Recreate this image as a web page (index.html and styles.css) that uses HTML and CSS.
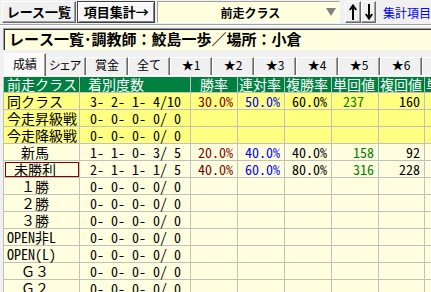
FILE: index.html
```html
<!DOCTYPE html>
<html lang="ja">
<head>
    <meta charset="UTF-8">
    <title>項目集計</title>
    <link rel="stylesheet" href="styles.css">
</head>
<body>
    <div class="toolbar">
        <button class="btn btn-list">レース一覧</button>
        <button class="btn btn-sum">項目集計→</button>
        <div class="combo">
            <span class="combo-text">前走クラス</span>
            <svg class="combo-arrow" width="10" height="8" viewBox="0 0 10 8"><polygon points="0,0 10,0 5,8" fill="#808080"/></svg>
        </div>
        <button class="arrow-btn arrow-up"><svg width="8" height="16" viewBox="0 0 8 16"><path d="M4 2 V16 M0.8 6 L4 1.5 L7.2 6" stroke="#000" stroke-width="2" fill="none"/></svg></button>
        <button class="arrow-btn arrow-down"><svg width="8" height="16" viewBox="0 0 8 16"><path d="M4 0 V14 M0.8 10 L4 14.5 L7.2 10" stroke="#000" stroke-width="2" fill="none"/></svg></button>
        <span class="link">集計項目</span>
    </div>

    <div class="title">レース一覧･調教師：鮫島一歩／場所：小倉</div>

    <div class="tabs">
        <div class="tab active">成績</div>
        <div class="tab tab-share">シェア</div>
        <div class="tab">賞金</div>
        <div class="tab">全て</div>
        <div class="tab">★1</div>
        <div class="tab">★2</div>
        <div class="tab">★3</div>
        <div class="tab">★4</div>
        <div class="tab">★5</div>
        <div class="tab">★6</div>
        <div class="tab">★7</div>
    </div>

    <div class="grid">
        <div class="row head">
            <div class="cell">前走クラス</div>
            <div class="cell h-count">着別度数</div>
            <div class="cell h-win">勝率</div>
            <div class="cell">連対率</div>
            <div class="cell">複勝率</div>
            <div class="cell">単回値</div>
            <div class="cell">複回値</div>
            <div class="cell">単回率</div>
        </div>
        <div class="row hi">
            <div class="cell label">同クラス</div>
            <div class="cell count num">3- 2- 1- 4/10</div>
            <div class="cell val num c-win">30.0%</div>
            <div class="cell val num c-ren">50.0%</div>
            <div class="cell val num">60.0%</div>
            <div class="cell val num c-tan pad-wide">237</div>
            <div class="cell val num">160</div>
            <div class="cell"></div>
        </div>
        <div class="row hi">
            <div class="cell label">今走昇級戦</div>
            <div class="cell count num">0- 0- 0- 0/ 0</div>
            <div class="cell"></div><div class="cell"></div><div class="cell"></div><div class="cell"></div><div class="cell"></div><div class="cell"></div>
        </div>
        <div class="row hi">
            <div class="cell label">今走降級戦</div>
            <div class="cell count num">0- 0- 0- 0/ 0</div>
            <div class="cell"></div><div class="cell"></div><div class="cell"></div><div class="cell"></div><div class="cell"></div><div class="cell"></div>
        </div>
        <div class="row">
            <div class="cell label">　新馬</div>
            <div class="cell count num">1- 1- 0- 3/ 5</div>
            <div class="cell val num c-win">20.0%</div>
            <div class="cell val num c-ren">40.0%</div>
            <div class="cell val num">40.0%</div>
            <div class="cell val num c-tan">158</div>
            <div class="cell val num">92</div>
            <div class="cell"></div>
        </div>
        <div class="row">
            <div class="cell label sel"> 未勝利</div>
            <div class="cell count num">2- 1- 1- 1/ 5</div>
            <div class="cell val num c-win">40.0%</div>
            <div class="cell val num c-ren">60.0%</div>
            <div class="cell val num">80.0%</div>
            <div class="cell val num c-tan">316</div>
            <div class="cell val num">228</div>
            <div class="cell"></div>
        </div>
        <div class="row">
            <div class="cell label">　１勝</div>
            <div class="cell count num">0- 0- 0- 0/ 0</div>
            <div class="cell"></div><div class="cell"></div><div class="cell"></div><div class="cell"></div><div class="cell"></div><div class="cell"></div>
        </div>
        <div class="row">
            <div class="cell label">　２勝</div>
            <div class="cell count num">0- 0- 0- 0/ 0</div>
            <div class="cell"></div><div class="cell"></div><div class="cell"></div><div class="cell"></div><div class="cell"></div><div class="cell"></div>
        </div>
        <div class="row">
            <div class="cell label">　３勝</div>
            <div class="cell count num">0- 0- 0- 0/ 0</div>
            <div class="cell"></div><div class="cell"></div><div class="cell"></div><div class="cell"></div><div class="cell"></div><div class="cell"></div>
        </div>
        <div class="row">
            <div class="cell label num">OPEN非L</div>
            <div class="cell count num">0- 0- 0- 0/ 0</div>
            <div class="cell"></div><div class="cell"></div><div class="cell"></div><div class="cell"></div><div class="cell"></div><div class="cell"></div>
        </div>
        <div class="row">
            <div class="cell label num">OPEN(L)</div>
            <div class="cell count num">0- 0- 0- 0/ 0</div>
            <div class="cell"></div><div class="cell"></div><div class="cell"></div><div class="cell"></div><div class="cell"></div><div class="cell"></div>
        </div>
        <div class="row">
            <div class="cell label">　Ｇ３</div>
            <div class="cell count num">0- 0- 0- 0/ 0</div>
            <div class="cell"></div><div class="cell"></div><div class="cell"></div><div class="cell"></div><div class="cell"></div><div class="cell"></div>
        </div>
        <div class="row">
            <div class="cell label">　Ｇ２</div>
            <div class="cell count num">0- 0- 0- 0/ 0</div>
            <div class="cell"></div><div class="cell"></div><div class="cell"></div><div class="cell"></div><div class="cell"></div><div class="cell"></div>
        </div>
    </div>
</body>
</html>
```

FILE: styles.css
```css
body {
    margin: 0;
    width: 431px;
    height: 292px;
    overflow: hidden;
    background: #f0f0f0;
    font-family: "Noto Sans CJK JP", sans-serif;
    color: #000;
}

/* top bar */
.toolbar {
    display: flex;
    align-items: center;
    height: 24px;
    padding-left: 2px;
    border-bottom: 1px solid #a0a0a0;
    box-shadow: 0 1px 0 #fff;
    white-space: nowrap;
}
.btn {
    box-sizing: border-box;
    height: 22px;
    margin: 0;
    padding: 0;
    font: bold 13px/20px "Noto Sans CJK JP", sans-serif;
    color: #000;
    background: #f0f0f0;
    border: 1px solid;
    border-color: #fff #696969 #696969 #fff;
    box-shadow: inset -1px -1px 0 #a0a0a0;
}
.btn-list {
    width: 75px;
}
.btn-sum {
    width: 80px;
    margin-left: 1px;
    background: #f8f8f8;
    border-color: #404040;
    box-shadow: inset 1px 1px 0 #fff, inset -1px -1px 0 #808080;
}
.combo {
    box-sizing: border-box;
    display: flex;
    align-items: center;
    width: 186px;
    height: 22px;
    margin-left: 2px;
    background: #ffffe0;
    border: 1px solid;
    border-color: #a0a0a0 #fff #fff #a0a0a0;
}
.combo-text {
    flex: 1;
    text-align: center;
    padding-left: 16px;
    font-size: 12px;
    font-weight: bold;
}
.combo-arrow {
    margin-right: 3px;
}
.arrow-btn {
    box-sizing: border-box;
    width: 16px;
    height: 22px;
    margin: 0;
    padding: 0;
    display: flex;
    align-items: center;
    justify-content: center;
    background: #f0f0f0;
    border: 1px solid;
    border-color: #fff #696969 #696969 #fff;
    box-shadow: inset -1px -1px 0 #a0a0a0;
}
.arrow-up {
    margin-left: 5px;
}
.arrow-down {
    width: 15px;
}
.link {
    margin-left: 7px;
    font-size: 12px;
    color: #0000ff;
}

/* caption box */
.title {
    box-sizing: border-box;
    width: 440px;
    height: 22px;
    margin: 3px 0 0 3px;
    padding-left: 5px;
    background: #ffffe0;
    border-top: 1px solid #a0a0a0;
    border-left: 1px solid #a0a0a0;
    box-shadow: inset 1px 1px 0 #303030;
    font-family: "Noto Sans Mono CJK JP", "Noto Sans CJK JP", sans-serif;
    font-size: 15px;
    font-weight: bold;
    line-height: 20px;
    white-space: nowrap;
}

/* tab strip */
.tabs {
    display: flex;
    align-items: flex-end;
    height: 22px;
    margin-top: 3px;
    padding-left: 4px;
    border-bottom: 1px solid #fff;
    white-space: nowrap;
}
.tab {
    box-sizing: border-box;
    flex: none;
    width: 42px;
    height: 18px;
    font-size: 12px;
    line-height: 14px;
    text-align: center;
    background: #f0f0f0;
    border-top: 1px solid #fff;
    border-left: 1px solid #fff;
    border-right: 1px solid #696969;
    box-shadow: inset -1px 0 0 #a0a0a0;
}
.tab.active {
    position: relative;
    z-index: 1;
    height: 23px;
    margin-right: -2px;
    margin-bottom: -1px;
    padding-top: 3px;
    background: #fafafa;
}
.tab-share {
    font-feature-settings: "palt";
}

/* result grid */
.grid {
    margin: 1px 0 0 3px;
    border-left: 1px solid #c0c0c0;
    font-family: "Noto Sans Mono CJK JP", "Noto Sans CJK JP", sans-serif;
    font-size: 14px;
}
.row {
    display: grid;
    grid-template-columns: 76px 111px 47px 47px 47px 47px 46px 47px;
    height: 17px;
    background: #ffffe0;
}
.row.hi {
    background: #ffff80;
}
.row.head {
    height: 16px;
    background: #008040;
    color: #fff;
}
.cell {
    box-sizing: border-box;
    padding-left: 1px;
    border-right: 1px solid #c0c0c0;
    border-bottom: 1px solid #c0c0c0;
    line-height: 16px;
    white-space: pre;
}
.head .cell {
    line-height: 15px;
}
.head .cell:first-child {
    padding-left: 3px;
}
.h-count {
    padding-left: 8px;
}
.h-win {
    padding-left: 9px;
}
.label {
    padding-left: 3px;
}
.num {
    font-feature-settings: "hwid";
}
.count {
    text-align: center;
}
.val {
    text-align: right;
    padding-right: 4px;
}
.pad-wide {
    padding-right: 14px;
}
.c-win {
    color: #800000;
}
.c-ren {
    color: #0000ff;
}
.c-tan {
    color: #008000;
}
.sel {
    outline: 1px solid #800000;
    outline-offset: -2px;
}
```
